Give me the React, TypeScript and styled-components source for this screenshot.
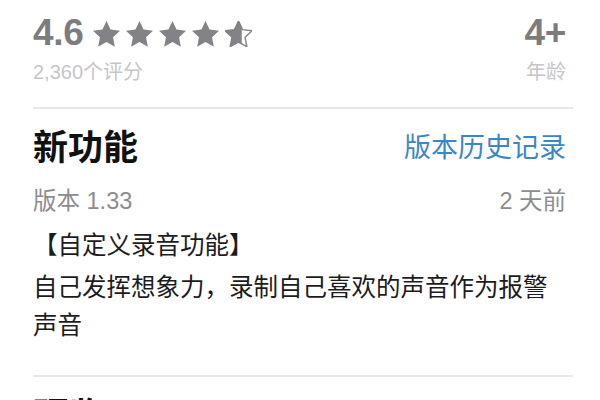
import React from 'react';
import styled, { createGlobalStyle } from 'styled-components';

const GlobalStyle = createGlobalStyle`
  html, body {
    margin: 0;
    padding: 0;
    background: #ffffff;
  }
  body {
    font-family: 'Liberation Sans', 'Noto Sans CJK SC', sans-serif;
    -webkit-font-smoothing: antialiased;
  }
`;

const Page = styled.div`
  width: 600px;
  height: 400px;
  overflow: hidden;
  box-sizing: border-box;
  padding: 13px 34px 0 33px;
`;

const TopRow = styled.div`
  display: flex;
  justify-content: space-between;
  align-items: flex-start;
`;

const Column = styled.div<{ $align?: 'left' | 'right' }>`
  display: flex;
  flex-direction: column;
  align-items: ${(p) => (p.$align === 'right' ? 'flex-end' : 'flex-start')};
`;

const ScoreLine = styled.div`
  display: flex;
  align-items: center;
  gap: 9px;
`;

const BigValue = styled.span`
  font-size: 37px;
  line-height: 40px;
  font-weight: 700;
  color: #7c7c7f;
  letter-spacing: -0.3px;
`;

const Stars = styled.div`
  display: flex;
  gap: 6px;
  margin-top: 1px;
`;

const Caption = styled.span`
  margin-top: 7px;
  font-size: 20px;
  line-height: 24px;
  color: #c6c6ca;
`;

const Divider = styled.div<{ $top: number }>`
  height: 2px;
  background: #e8e8ea;
  margin-top: ${(p) => p.$top}px;
  margin-right: -7px;
`;

const HeaderRow = styled.div`
  display: flex;
  justify-content: space-between;
  align-items: center;
  margin-top: 19px;
`;

const SectionTitle = styled.h2`
  margin: 0;
  font-size: 35px;
  line-height: 40px;
  font-weight: 700;
  color: #111111;
`;

const Link = styled.a`
  font-size: 27px;
  line-height: 34px;
  color: #3b86c7;
  text-decoration: none;
`;

const MetaRow = styled.div`
  display: flex;
  justify-content: space-between;
  margin-top: 19px;
  font-size: 23.5px;
  line-height: 28px;
  color: #8c8c90;
`;

const Notes = styled.div`
  margin-top: 12px;
  font-size: 24.5px;
  line-height: 38px;
  color: #1c1c1e;
`;

const NoteLine = styled.p<{ $gap?: number }>`
  margin: 0 0 ${(p) => p.$gap ?? 0}px;
`;

// chunky five-point star
const starPoints = (() => {
  const pts: string[] = [];
  const cx = 13.5;
  const cy = 14.2;
  for (let i = 0; i < 10; i++) {
    const r = i % 2 === 0 ? 14.2 : 6.9;
    const a = (Math.PI / 5) * i - Math.PI / 2;
    pts.push(`${(cx + r * Math.cos(a)).toFixed(2)},${(cy + r * Math.sin(a)).toFixed(2)}`);
  }
  return pts.join(' ');
})();

function Star({ fill }: { fill: number }) {
  const id = `star-clip-${Math.round(fill * 100)}`;
  return (
    <svg width="27" height="26" viewBox="0 0 27 26">
      <defs>
        <clipPath id={id}>
          <rect x="0" y="0" width={27 * fill} height="26" />
        </clipPath>
      </defs>
      {fill < 1 && (
        <polygon
          points={starPoints}
          fill="none"
          stroke="#838387"
          strokeWidth="1.4"
          strokeLinejoin="round"
        />
      )}
      <polygon points={starPoints} fill="#838387" clipPath={`url(#${id})`} />
    </svg>
  );
}

export default function App() {
  const stars = [1, 1, 1, 1, 0.62];
  return (
    <>
      <GlobalStyle />
      <Page>
        <TopRow>
          <Column>
            <ScoreLine>
              <BigValue>4.6</BigValue>
              <Stars>
                {stars.map((f, i) => (
                  <Star key={i} fill={f} />
                ))}
              </Stars>
            </ScoreLine>
            <Caption>2,360个评分</Caption>
          </Column>
          <Column $align="right">
            <BigValue>4+</BigValue>
            <Caption>年龄</Caption>
          </Column>
        </TopRow>

        <Divider $top={23} />

        <HeaderRow>
          <SectionTitle>新功能</SectionTitle>
          <Link>版本历史记录</Link>
        </HeaderRow>

        <MetaRow>
          <span>版本 1.33</span>
          <span>2 天前</span>
        </MetaRow>

        <Notes>
          <NoteLine $gap={4}>【自定义录音功能】</NoteLine>
          <NoteLine>自己发挥想象力，录制自己喜欢的声音作为报警声音</NoteLine>
        </Notes>

        <Divider $top={30} />

        <HeaderRow>
          <SectionTitle>预览</SectionTitle>
        </HeaderRow>
      </Page>
    </>
  );
}
